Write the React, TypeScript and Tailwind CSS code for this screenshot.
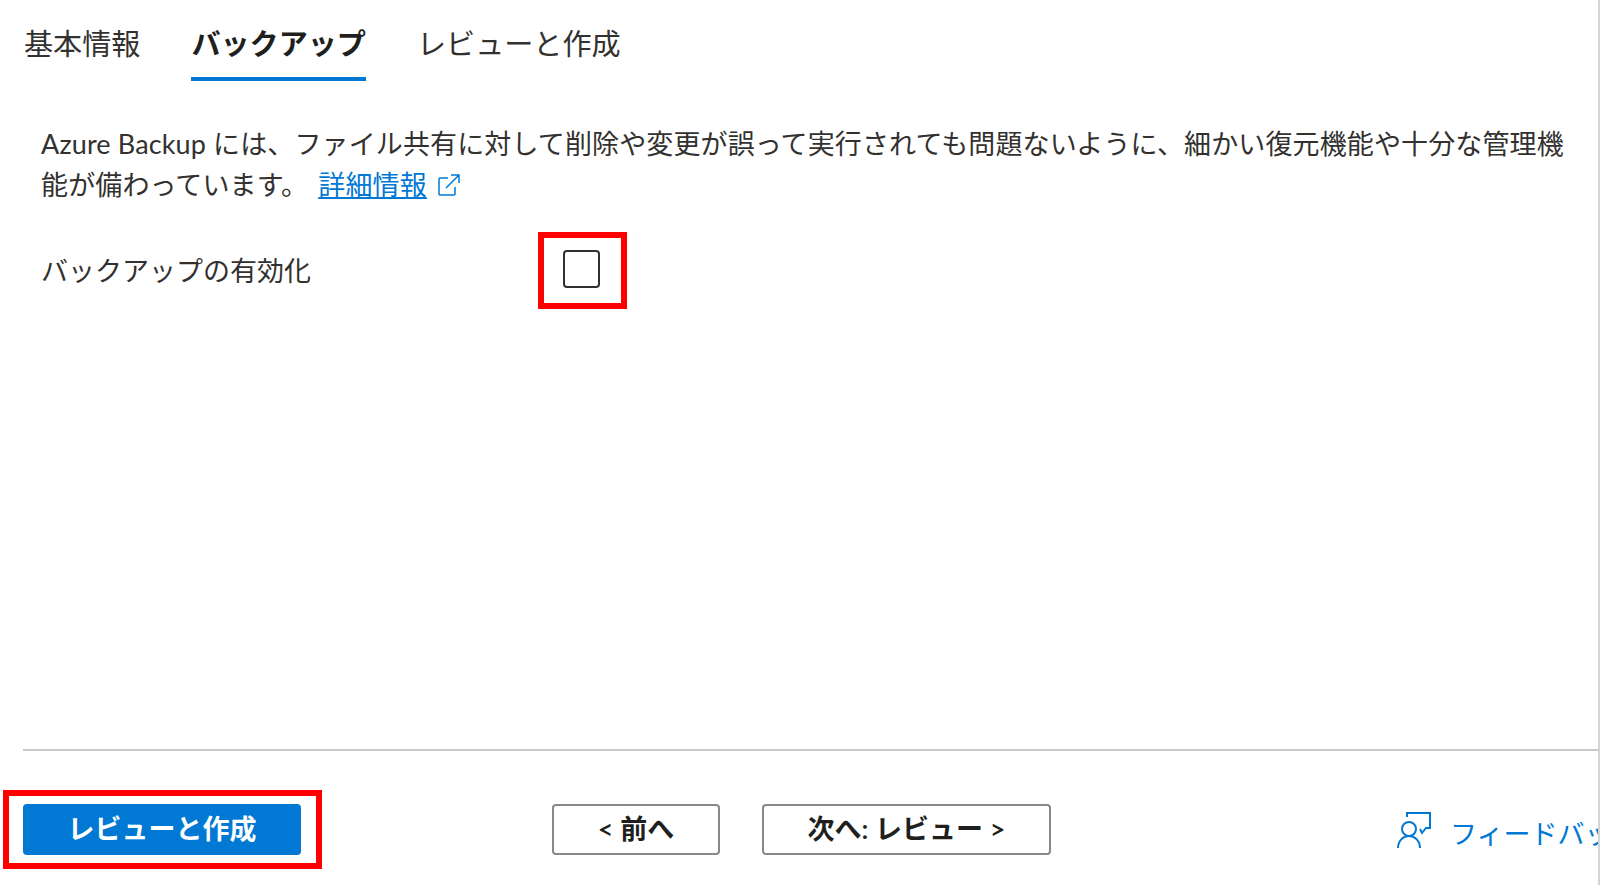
const TABS = [
  { label: '基本情報', active: false },
  { label: 'バックアップ', active: true },
  { label: 'レビューと作成', active: false },
];

function FeedbackIcon() {
  return (
    <svg className="w-[36px] h-[38px] shrink-0 text-[#0078d4]" viewBox="0 0 36 38" fill="none" stroke="currentColor" strokeWidth={2}>
      <path d="M11 6V2h23v15h-4l-4 5-2-4" />
      <circle cx="13" cy="18" r="7" />
      <path d="M2 37c0-7 5-12 11-12s11 5 11 12" />
    </svg>
  );
}

export default function App() {
  return (
    <div className="w-[1600px] h-[885px] flex flex-col bg-white overflow-hidden border-r-2 border-[#d4d4d4] font-['Lato','Noto_Sans_CJK_JP',sans-serif] text-[#323130]">
      {/* Tabs */}
      <div className="flex pl-[24px] gap-[51px] h-[81px] shrink-0 text-[29.1px]">
        {TABS.map(({ label, active }) => (
          <div
            key={label}
            className={`h-full pt-[22px] leading-[44px] whitespace-nowrap ${
              active ? 'font-bold border-b-4 border-[#0078d4] text-[#201f1e]' : ''
            }`}
          >
            {label}
          </div>
        ))}
      </div>

      {/* Description */}
      <p className="mt-[42px] ml-[41px] w-[1535px] text-[27px] leading-[41px] tracking-[0.13px]">
        Azure Backup には、ファイル共有に対して削除や変更が誤って実行されても問題ないように、細かい復元機能や十分な管理機能が備わっています。
        <a className="ml-[10px] text-[#0078d4] underline underline-offset-2">詳細情報</a>
        <svg className="inline-block ml-[10px] w-[24px] h-[24px] text-[#0078d4] align-[-2px]" viewBox="0 0 24 24" fill="none" stroke="currentColor" strokeWidth={1.5}>
          <path d="M11 5H3a1 1 0 0 0-1 1v15a1 1 0 0 0 1 1h14a1 1 0 0 0 1-1v-7" />
          <path d="M9 15L22 2M14 2h8v8" />
        </svg>
      </p>

      {/* Enable backup */}
      <div className="mt-[27px] ml-[41px] flex items-center">
        <span className="w-[497px] text-[27px] leading-[41px]">バックアップの有効化</span>
        <div className="w-[89px] h-[77px] border-[6px] border-[#ff0000] flex pl-[19px] pt-[12px]">
          <div className="w-[37px] h-[38px] border-2 border-[#323130] rounded-[4px]" />
        </div>
      </div>

      <div className="flex-1" />

      <div className="ml-[23px] h-[2px] bg-[#c8c8c8]" />

      {/* Footer */}
      <div className="mt-[39px] mb-[16px] pl-[3px] flex items-center">
        <div className="w-[319px] h-[79px] border-[6px] border-[#ff0000] px-[14px] py-[8px] shrink-0">
          <button className="w-[278px] h-[51px] rounded-[4px] bg-[#0078d4] text-white text-[27px] font-semibold">
            レビューと作成
          </button>
        </div>
        <button className="ml-[230px] w-[168px] h-[51px] shrink-0 rounded-[4px] border-2 border-[#8a8886] text-[27px] font-semibold text-[#201f1e]">
          &lt; 前へ
        </button>
        <button className="ml-[42px] w-[289px] h-[51px] shrink-0 rounded-[4px] border-2 border-[#8a8886] text-[27px] font-semibold text-[#201f1e]">
          次へ: レビュー &gt;
        </button>
        <div className="ml-[345px] flex items-center gap-[18px] whitespace-nowrap text-[27px] text-[#0078d4]">
          <FeedbackIcon />
          <span className="mt-[10px]">フィードバック</span>
        </div>
      </div>
    </div>
  );
}
